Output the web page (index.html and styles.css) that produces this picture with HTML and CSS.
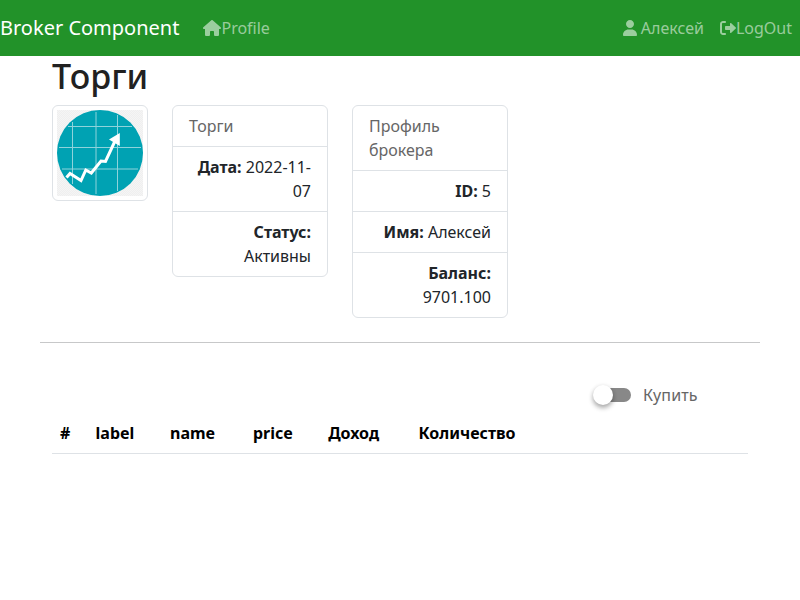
FILE: index.html
```html
<!DOCTYPE html>
<html lang="ru">
<head>
<meta charset="utf-8">
<title>Broker Component</title>
<link rel="stylesheet" href="styles.css">
</head>
<body>
<nav class="navbar">
  <a class="brand">Broker Component</a>
  <a class="nav-link"><svg class="icon" width="18" height="16" viewBox="0 0 576 512"><path d="M575.8 255.5c0 18-15 32.1-32 32.1h-32l.7 160.2c0 2.7-.2 5.4-.5 8.1V472c0 22.1-17.9 40-40 40H392c-22.1 0-40-17.9-40-40V384c0-17.7-14.3-32-32-32H256c-17.7 0-32 14.3-32 32v88c0 22.1-17.9 40-40 40H104c-22.1 0-40-17.9-40-40V287.6H32c-18 0-32-14-32-32.1c0-9 3-17 10-24L266.4 8c7-7 15-8 22-8s15 2 21 7L564.8 231.5c8 7 12 15 11 24z"/></svg>Profile</a>
  <div class="nav-right">
    <a class="nav-link"><svg class="icon" width="14" height="16" viewBox="0 0 448 512"><path d="M224 256c70.7 0 128-57.3 128-128S294.7 0 224 0S96 57.3 96 128s57.3 128 128 128zM274.7 304H173.3C77.6 304 0 381.6 0 477.3c0 19.2 15.5 34.7 34.7 34.7h378.6c19.2 0 34.7-15.5 34.7-34.7C448 381.6 370.4 304 274.7 304z"/></svg> Алексей</a>
    <a class="nav-link"><svg class="icon" width="16" height="16" viewBox="0 0 512 512"><path d="M96 480h64c17.7 0 32-14.3 32-32s-14.3-32-32-32H96c-17.7 0-32-14.3-32-32V128c0-17.7 14.3-32 32-32h64c17.7 0 32-14.3 32-32s-14.3-32-32-32H96C43 32 0 75 0 128v256c0 53 43 96 96 96zM504.8 238.5l-144.1-136c-7-6.6-17.2-8.4-26-4.6c-8.8 3.8-14.5 12.5-14.5 22.1l-.1 72H192c-17.7 0-32 14.3-32 32v64c0 17.7 14.3 32 32 32h128.1l.1 72c0 9.6 5.7 18.2 14.5 22c8.8 3.8 19 2 26-4.6l144.1-136c9.6-9 9.6-25.8 0-34.9z"/></svg>LogOut</a>
  </div>
</nav>
<main class="container">
  <h1>Торги</h1>
  <div class="summary">
    <div class="thumb">
      <svg width="86" height="86" viewBox="0 0 86 86">
        <defs><pattern id="checks" width="2" height="2" patternUnits="userSpaceOnUse"><rect width="2" height="2" fill="#f5f5f5"/><path d="M0 0h1v1H0zM1 1h1v1H1z" fill="#efefef"/></pattern></defs>
        <rect width="86" height="86" fill="url(#checks)"/>
        <circle cx="43" cy="43" r="43" fill="#00a2b3"/>
        <path d="M15.5 12v62M39 2v82M60.5 5v76M11 16.500h64M2 37.500h82M5 59h76" fill="none" stroke="#8fd3db" stroke-width="1"/>
        <path d="M9.5 67.5L13 63.500l11 7L28.800 60l5.500 3L44 51l4.500 .500L58 31" fill="none" stroke="#fff" stroke-width="3"/>
        <path d="M52 29.500L62.800 23V36z" fill="#fff"/>
      </svg>
    </div>
    <ul class="card">
      <li class="card-title">Торги</li>
      <li><b>Дата:</b> 2022-11-07</li>
      <li><b>Статус:</b> Активны</li>
    </ul>
    <ul class="card">
      <li class="card-title">Профиль брокера</li>
      <li><b>ID:</b> 5</li>
      <li><b>Имя:</b> Алексей</li>
      <li><b>Баланс:</b> 9701.100</li>
    </ul>
  </div>
  <hr>
  <div class="switch"><span class="track"><span class="knob"></span></span><span>Купить</span></div>
  <table>
    <thead><tr><th class="c-num">#</th><th class="c-label">label</th><th class="c-name">name</th><th class="c-price">price</th><th class="c-income">Доход</th><th>Количество</th></tr></thead>
  </table>
</main>
</body>
</html>
```
FILE: styles.css
```css
* { box-sizing: border-box; }
body {
  margin: 0;
  font: 400 16px/24px "Noto Sans", sans-serif;
  color: #212529;
  background: #fff;
}
.navbar {
  display: flex;
  align-items: center;
  height: 56px;
  background: #229229;
}
.brand {
  margin-right: 16px;
  font-size: 20px;
  line-height: 30px;
  color: #fff;
}
.nav-link { padding: 8px; color: rgba(255, 255, 255, .55); white-space: nowrap; }
.nav-right { display: flex; margin-left: auto; }
.icon { fill: currentColor; vertical-align: -2px; }
.container { width: 720px; margin: 0 auto; }
h1 {
  margin: 0 12px 8px;
  font-size: 34px;
  font-weight: 500;
  line-height: 40.8px;
  color: #212121;
}
.summary {
  display: grid;
  grid-template-columns: 96px 156px 156px;
  column-gap: 24px;
  align-items: start;
  margin: 0 12px;
}
.thumb {
  height: 96px;
  padding: 4px;
  border: 1px solid #dee2e6;
  border-radius: 6px;
}
.thumb svg { display: block; }
.card {
  margin: 0;
  padding: 0;
  list-style: none;
  border: 1px solid #dee2e6;
  border-radius: 6px;
}
.card li { padding: 8px 16px; text-align: right; }
.card li + li { border-top: 1px solid #dee2e6; }
.card .card-title { text-align: left; color: #666; }
b { font-weight: 700; }
hr { height: 1px; margin: 24px 0 40px; border: 0; background: #c7c8c9; }
.switch {
  display: flex;
  align-items: center;
  gap: 12px;
  height: 24px;
  margin-left: 559px;
  color: #666;
  letter-spacing: .15px;
}
.track { position: relative; width: 32px; height: 14px; border-radius: 7px; background: #888; }
.knob {
  position: absolute;
  top: -3px;
  left: -6px;
  width: 20px;
  height: 20px;
  border-radius: 50%;
  background: #fff;
  box-shadow: 0 3px 5px rgba(0, 0, 0, .3), 0 1px 5px rgba(0, 0, 0, .1);
}
table {
  width: 696px;
  margin: 6px 12px 0;
  border-collapse: collapse;
  table-layout: fixed;
}
th { padding: 8px; text-align: left; font-weight: 700; color: #000; border-bottom: 1px solid #dee2e6; }
.c-num { width: 35.6px; }
.c-label { width: 74.4px; }
.c-name { width: 83px; }
.c-price { width: 75.2px; }
.c-income { width: 90.4px; }
```
